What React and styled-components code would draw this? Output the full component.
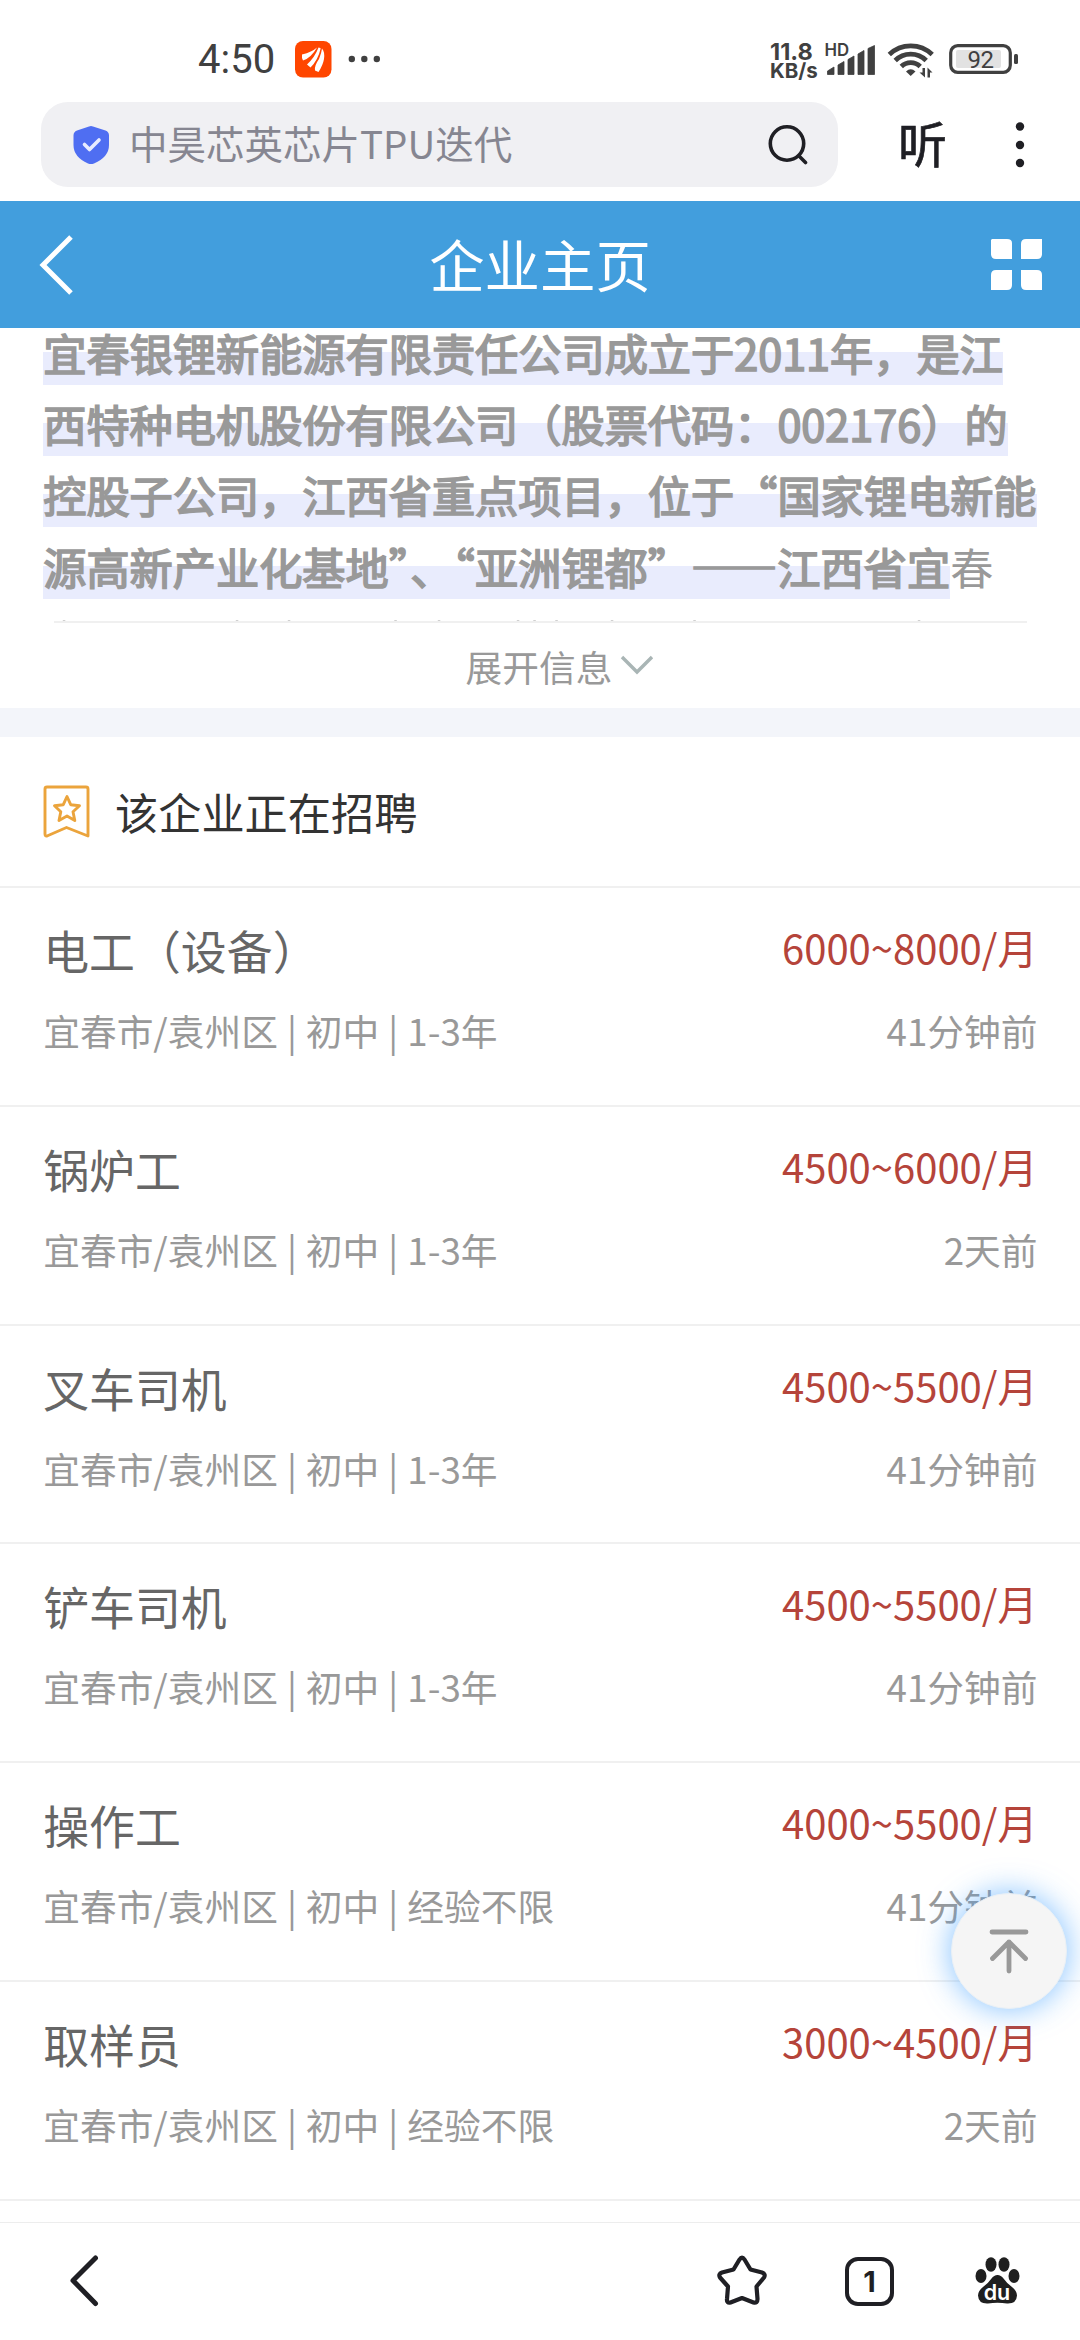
import React from 'react';
import styled, { createGlobalStyle } from 'styled-components';

const Global = createGlobalStyle`
  * { box-sizing: border-box; }
  html, body { margin: 0; padding: 0; background: #fff; }
  body {
    width: 1080px;
    font-family: "Noto Sans CJK SC", sans-serif;
    overflow: hidden;
  }
  svg { display: block; flex: none; }
`;

const Screen = styled.div`
  position: relative;
  width: 1080px;
  height: 2340px;
  display: flex;
  flex-direction: column;
  background: #fff;
  overflow: hidden;
`;

const StatusBar = styled.div`
  flex: none;
  height: 102px;
  display: flex;
  align-items: flex-start;
  padding: 0 60px 0 198px;
  color: #404040;
`;

const Clock = styled.div`
  width: 97px;
  padding-top: 36px;
  font: 400 40px/47px Roboto, sans-serif;
`;

const StatusGlyphs = styled.div`
  margin-top: 40px;
  flex: 1;
`;

const NetSpeed = styled.div`
  width: 55px;
  padding-top: 42px;
  display: flex;
  flex-direction: column;
  font-family: Inter, sans-serif;
  font-weight: 700;
  white-space: nowrap;
`;

const NetLine = styled.div`
  height: 19px;
  line-height: 19px;
  font-size: ${p => p.$size}px;
`;

const Radio = styled.div`
  padding-top: 40px;
`;

const SearchRow = styled.div`
  flex: none;
  height: 99px;
  display: flex;
  align-items: flex-start;
  padding: 0 41px;
`;

const SearchPill = styled.div`
  width: 797px;
  height: 85px;
  border-radius: 27px;
  background: #f0f0f3;
  display: flex;
  align-items: center;
  padding: 0 30px 0 31px;
`;

const Query = styled.div`
  flex: 1;
  margin-left: 19px;
  padding-bottom: 5px;
  font-size: 38.5px;
  line-height: 56px;
  color: #868691;
  white-space: nowrap;
`;

const Listen = styled.div`
  width: 52px;
  margin-left: 60px;
  font-size: 49px;
  line-height: 80px;
  color: #1f1f24;
  -webkit-text-stroke: 0.7px #1f1f24;
`;

const KebabBox = styled.div`
  margin: 16px 0 0 65px;
`;

const NavBar = styled.div`
  flex: none;
  height: 127px;
  background: #429edd;
  display: grid;
  grid-template-columns: 90px 1fr 90px;
  align-items: center;
`;

const NavTitle = styled.div`
  padding-bottom: 4px;
  text-align: center;
  font-size: 55.4px;
  line-height: 80px;
  color: #fff;
`;

const NavSide = styled.div`
  display: flex;
  padding-left: ${p => p.$left || 0}px;
`;

const Intro = styled.div`
  flex: none;
  height: 293px;
  padding-left: 43.2px;
  display: flex;
  flex-direction: column;
  justify-content: flex-end;
  color: #999;
`;

const IntroLine = styled.div`
  flex: none;
  height: 71.28px;
  display: flex;
  font-size: 43.2px;
  line-height: 66px;
  white-space: nowrap;
`;

const Mark = styled.span`
  height: 66px;
  -webkit-text-stroke: 1.7px #999;
  background: linear-gradient(transparent 50%, #e9ecfd 50%);
`;

const TipsBox = styled.div`
  flex: none;
  height: 17px;
  display: flex;
  align-items: flex-end;
`;

const ExpandRow = styled.div`
  flex: none;
  height: 87px;
  display: flex;
  flex-direction: column;
  align-items: center;
`;

const ExpandRule = styled.div`
  width: 973px;
  height: 2px;
  background: #f0f0f0;
`;

const ExpandButton = styled.div`
  flex: 1;
  display: flex;
  align-items: center;
  gap: 8px;
  padding-left: 40px;
  font-size: 36.72px;
  color: #999;
`;

const ChevronBox = styled.div`
  padding-bottom: 1px;
`;

const Band = styled.div`
  flex: none;
  height: 29px;
  background: #f3f5fa;
`;

const SectionHead = styled.div`
  flex: none;
  height: 151px;
  display: flex;
  align-items: center;
  gap: 25px;
  padding-left: 43px;
  border-bottom: 2px solid #f0f0f0;
  color: #333;
`;

const SectionTitle = styled.div`
  padding-bottom: 2px;
  font-size: 43.2px;
`;

const List = styled.div`
  flex: 1;
  min-height: 0;
  overflow: hidden;
`;

const JobRow = styled.div`
  height: 218.83px;
  padding: 26px 42.5px 0 43.2px;
  border-bottom: 2px solid #f0f0f0;
`;

const JobLine = styled.div`
  display: flex;
  justify-content: space-between;
  align-items: flex-start;
  white-space: nowrap;
`;

const JobTitle = styled.div`
  font-size: 45.9px;
  line-height: 70px;
  color: #666;
`;

const Salary = styled.div`
  font-size: 40px;
  line-height: 66px;
  color: #b5443a;
`;

const Meta = styled.div`
  font-size: 36.72px;
  line-height: 56px;
  margin-top: 18px;
  word-spacing: 0.8px;
  color: #999;
`;

const TopButton = styled.div`
  position: absolute;
  left: 951px;
  top: 1893px;
  width: 116px;
  height: 116px;
  border-radius: 50%;
  background: #f5f5f5;
  border: 1px solid #e9f0f6;
  box-shadow: 0 0 30px 1px rgba(64, 160, 255, 0.62);
  display: flex;
  align-items: center;
  justify-content: center;
`;

const BottomBar = styled.div`
  flex: none;
  height: 118px;
  border-top: 1px solid #ededed;
  background: #fff;
  display: flex;
  align-items: flex-start;
  justify-content: space-between;
  padding: 29px 59px 0 66px;
`;

const BottomGroup = styled.div`
  display: flex;
  align-items: flex-start;
`;

const TabCount = styled.div`
  width: 49px;
  height: 49px;
  margin: 5px 81px 0 76px;
  border: 4.4px solid #1f1f24;
  border-radius: 13px;
  display: flex;
  align-items: center;
  justify-content: center;
  font: 700 29px/40px Inter, sans-serif;
  color: #1f1f24;
`;

const PawBox = styled.div`
  padding-top: 3px;
`;

const JOBS = [
  ['电工（设备）', '6000~8000/月', '1-3年', '41分钟前'],
  ['锅炉工', '4500~6000/月', '1-3年', '2天前'],
  ['叉车司机', '4500~5500/月', '1-3年', '41分钟前'],
  ['铲车司机', '4500~5500/月', '1-3年', '41分钟前'],
  ['操作工', '4000~5500/月', '经验不限', '41分钟前'],
  ['取样员', '3000~4500/月', '经验不限', '2天前'],
];

const INTRO = [
  '宜春银锂新能源有限责任公司成立于2011年，是江',
  '西特种电机股份有限公司（股票代码：002176）的',
  '控股子公司，江西省重点项目，位于“国家锂电新能',
];

const NotificationIcons = () => (
  <svg width="90" height="40" viewBox="295 40 90 40">
    <rect x="295" y="41" width="36.5" height="36.5" rx="8" fill="#ff4600" />
    <g fill="#fff">
      <path d="M302 54.500Q312 52 317 47.500Q311 58 303 60.500Q301.500 58.500 302 54.500Z" />
      <path d="M307 64.500Q315 57 318.500 47.500Q321 47.500 320.500 49Q318 60 310.500 67.500Z" />
      <path d="M315 70.500Q314 66 319 59Q321.500 53 322 48.500Q325 52 324 59Q323 65 318.500 72Z" />
    </g>
    <g fill="#404040">
      <circle cx="351.800" cy="59" r="3.200" /><circle cx="364.300" cy="59" r="3.200" /><circle cx="376.800" cy="59" r="3.200" />
    </g>
  </svg>
);

const RadioIcons = () => (
  <svg width="195" height="40" viewBox="825 40 195 40">
    <g fill="#404040">
      <text x="824.500" y="55.500" fontFamily="Inter, sans-serif" fontWeight="600" fontSize="16.800">HD</text>
      <path d="M827.500 74.500V71L834 67V74.500ZM838 74.500V65L844 61.500V74.500ZM848 74.500V59.500L854 56V74.500ZM858 74.500V54L864 50.500V74.500ZM868 74.500V48.500L874.500 45.500V74.500Z" stroke="#404040" strokeWidth=".8" strokeLinejoin="round" />
      <path d="M910.700 76L906 71.500Q910.700 67 915.500 71.500Z" />
      <path d="M925 68V77.500L919.500 72.500H922.500V68ZM927.500 77.500V67.500L932.500 72.500H930V77.500Z" />
    </g>
    <g fill="none" stroke="#404040" strokeWidth="4.800">
      <path d="M889.300 54.500A31 31 0 0 1 932.200 54.500" />
      <path d="M895.200 60.500A22 22 0 0 1 926.200 60.500" />
      <path d="M901.300 66.500A13.500 13.500 0 0 1 920.200 66.500" />
    </g>
    <rect x="950.700" y="45.700" width="59.600" height="26.600" rx="7" fill="none" stroke="#404040" strokeWidth="3.200" />
    <rect x="956" y="50" width="45" height="18" rx="2" fill="#e2e2e2" />
    <rect x="1014" y="54" width="4" height="10" rx="1.500" fill="#404040" />
    <text x="980.500" y="67.500" textAnchor="middle" fontFamily="Roboto, sans-serif" fontSize="24" letterSpacing="-.5" fill="#404040">92</text>
  </svg>
);

const Shield = () => (
  <svg width="38" height="40" viewBox="0 0 38 40">
    <path d="M17 1.500Q19 .7 21 1.500L33.500 5.600Q37 7 37 10.500V20Q37 32 22 38.500Q19 39.500 16 38.500Q1.500 32 1.500 20V10.500Q1.500 7 5 5.600Z" fill="#4f6ef2" />
    <path d="M12.500 19.500L17.500 24.500L27 15" fill="none" stroke="#e8ecff" strokeWidth="3.600" strokeLinecap="round" strokeLinejoin="round" />
  </svg>
);

const SearchIcon = () => (
  <svg width="42" height="44" viewBox="0 0 42 44">
    <g fill="none" stroke="#1f1f24" strokeWidth="3.600" strokeLinecap="round">
      <circle cx="21" cy="20.500" r="16.700" />
      <path d="M33 33L39.500 39.500" />
    </g>
  </svg>
);

const Kebab = () => (
  <svg width="10" height="56" viewBox="0 0 10 56">
    <g fill="#1f1f24"><circle cx="5" cy="8.500" r="4.200" /><circle cx="5" cy="27" r="4.200" /><circle cx="5" cy="45" r="4.200" /></g>
  </svg>
);

const GridIcon = () => (
  <svg width="52" height="52" viewBox="0 0 52 52" fill="#fff">
    <path d="M1 0H16Q21 0 21 4V20H5Q0 20 0 15V1Z" />
    <path d="M35 0H51V15Q51 20 46 20H30V5Q30 0 35 0Z" />
    <path d="M5 31H21V46Q21 51 16 51H0V36Q0 31 5 31Z" />
    <path d="M30 31H46Q51 31 51 36V51H35Q30 51 30 46Z" />
  </svg>
);

/* Upper tips of the clipped fifth line of the introduction. */
const ClippedTips = () => (
  <svg width="994" height="2" viewBox="43.200 0 994 2">
    {[63, 236, 288, 394.500, 438, 517, 533.500, 555.500, 611, 693.500, 918].map(x => (
      <rect key={x} x={x} y="1" width="2.500" height="1" fill="#d0d0d0" />
    ))}
  </svg>
);

const Bookmark = () => (
  <svg width="47" height="53" viewBox="0 0 47 53">
    <g fill="none" stroke="#eba43c" strokeWidth="2.900" strokeLinejoin="round">
      <path d="M4 2H43Q45 2 45 4V51L23.500 42.500L4 51Q2 51.500 2 49V4Q2 2 4 2Z" />
      <path d="M24 11.500L27.700 19.700L36.500 20.700L30 26.700L31.800 35.500L24 31L16 35.500L17.800 26.700L11.500 20.700L20.300 19.700Z" />
    </g>
  </svg>
);

const Paw = () => (
  <svg width="46" height="50" viewBox="0 0 46 50">
    <g fill="#1f1f1f">
      <ellipse cx="6" cy="21" rx="5.500" ry="7" />
      <ellipse cx="16" cy="9.500" rx="5.500" ry="7.300" />
      <ellipse cx="29" cy="9.500" rx="5.500" ry="7.300" />
      <ellipse cx="39" cy="21" rx="5.500" ry="7" />
      <path d="M22.500 20Q26 20 28.500 23.500Q32 28.500 37 32Q42 36 42 40.500Q41.500 49 32 48.500Q22.500 47 13 48.500Q3.500 49 3 40.500Q3 36 8 32Q13 28.500 16.500 23.500Q19 20 22.500 20Z" />
    </g>
    <text x="22" y="44.500" textAnchor="middle" fontFamily="Inter, sans-serif" fontWeight="600" fontSize="21.500" fill="#fff">du</text>
  </svg>
);

export default function App() {
  return (
    <Screen lang="zh-CN">
      <Global />
      <StatusBar>
        <Clock>4:50</Clock>
        <StatusGlyphs><NotificationIcons /></StatusGlyphs>
        <NetSpeed>
          <NetLine $size={23.5}>11.8</NetLine>
          <NetLine $size={20.5}>KB/s</NetLine>
        </NetSpeed>
        <Radio><RadioIcons /></Radio>
      </StatusBar>

      <SearchRow>
        <SearchPill>
          <Shield />
          <Query>中昊芯英芯片TPU迭代</Query>
          <SearchIcon />
        </SearchPill>
        <Listen>听</Listen>
        <KebabBox><Kebab /></KebabBox>
      </SearchRow>

      <NavBar>
        <NavSide $left={38}>
          <svg width="36" height="62" viewBox="0 0 36 62">
            <path d="M33 3L5 31L33 59" fill="none" stroke="#fff" strokeWidth="5" />
          </svg>
        </NavSide>
        <NavTitle>企业主页</NavTitle>
        <NavSide $left={1}><GridIcon /></NavSide>
      </NavBar>

      <Intro>
        {INTRO.map(t => <IntroLine key={t}><Mark>{t}</Mark></IntroLine>)}
        <IntroLine><Mark>源高新产业化基地”、“亚洲锂都”——江西省宜</Mark>春</IntroLine>
        <TipsBox><ClippedTips /></TipsBox>
      </Intro>

      <ExpandRow>
        <ExpandRule />
        <ExpandButton>
          展开信息
          <ChevronBox>
            <svg width="34" height="20" viewBox="0 0 34 20">
              <path d="M2 2L17 17L32 2" fill="none" stroke="#a9b5b5" strokeWidth="3.400" />
            </svg>
          </ChevronBox>
        </ExpandButton>
      </ExpandRow>

      <Band />
      <SectionHead><Bookmark /><SectionTitle>该企业正在招聘</SectionTitle></SectionHead>

      <List>
        {JOBS.map(([title, pay, exp, time]) => (
          <JobRow key={title}>
            <JobLine><JobTitle>{title}</JobTitle><Salary>{pay}</Salary></JobLine>
            <JobLine><Meta>宜春市/袁州区 | 初中 | {exp}</Meta><Meta>{time}</Meta></JobLine>
          </JobRow>
        ))}
      </List>

      <BottomBar>
        <svg width="36" height="56" viewBox="0 0 36 56">
          <path d="M29.500 6L7 28.500L29.500 51.500" fill="none" stroke="#1f1f24" strokeWidth="5" strokeLinecap="round" strokeLinejoin="round" />
        </svg>
        <BottomGroup>
          <svg width="54" height="56" viewBox="0 0 54 56">
            <path d="M24.500 7.500Q27 3.500 29.500 7.500L35.500 17.500L47 20.500Q51 22 49 25.500L41.500 34.500L42.500 47Q42.500 51.500 38.500 50.500L27 46L15.500 50.500Q11.500 51.500 12 47L13 34.500L5 25.500Q3 22 7 20.500L18.500 17.500Z" fill="none" stroke="#1f1f24" strokeWidth="4.200" strokeLinejoin="round" />
          </svg>
          <TabCount>1</TabCount>
          <PawBox><Paw /></PawBox>
        </BottomGroup>
      </BottomBar>

      <TopButton>
        <svg width="42" height="48" viewBox="0 0 42 48">
          <path d="M4 5H38M21 44V15M4.500 31.500L21 15L37.500 31.500" fill="none" stroke="#999" strokeWidth="4.800" strokeLinecap="round" strokeLinejoin="round" />
        </svg>
      </TopButton>
    </Screen>
  );
}
